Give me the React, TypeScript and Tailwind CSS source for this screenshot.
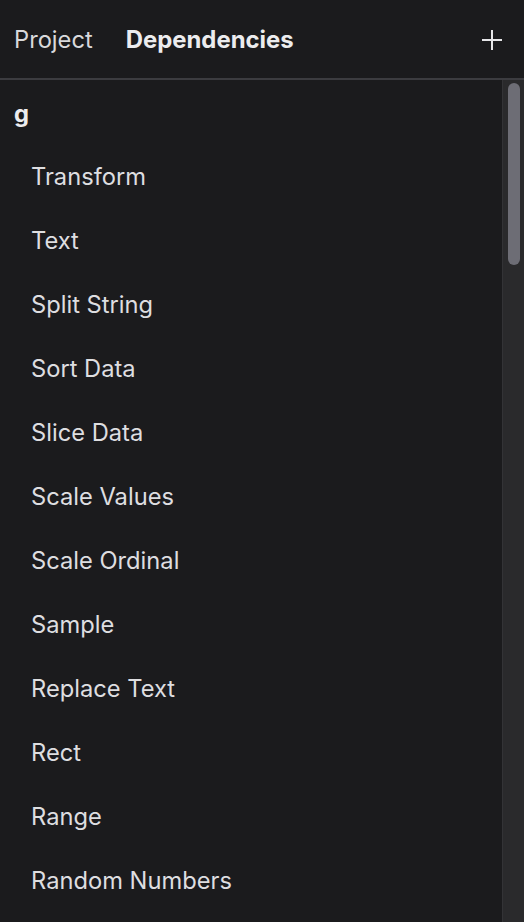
import React from "react";

const items = [
  "Transform",
  "Text",
  "Split String",
  "Sort Data",
  "Slice Data",
  "Scale Values",
  "Scale Ordinal",
  "Sample",
  "Replace Text",
  "Rect",
  "Range",
  "Random Numbers",
];

export default function App() {
  return (
    <div
      className="h-[922px] w-[524px] overflow-hidden bg-[#1b1b1d] flex flex-col"
      style={{ fontFamily: "Inter, 'Noto Sans', sans-serif" }}
    >
      <div className="h-[80px] shrink-0 flex items-center pl-[14px] pr-[22px] pt-[1px] border-b-2 border-[#3c3c40]">
        <span className="text-[23.7px] text-[#d9d9db]">Project</span>
        <span className="ml-[33px] text-[23.9px] font-bold text-[#ececee]">Dependencies</span>
        <span className="ml-auto flex">
          <svg width="20" height="20" viewBox="0 0 20 20" fill="none">
            <path d="M10 0v20M0 10h20" stroke="#e6e6e8" strokeWidth="2" />
          </svg>
        </span>
      </div>
      <div className="flex flex-1 min-h-0">
        <div className="flex-1 overflow-hidden">
          <div className="h-[65px] flex items-center pl-[14px] pt-[3px]">
            <span className="text-[23.7px] font-bold text-[#ececee]">g</span>
          </div>
          {items.map((t) => (
            <div key={t} className="h-[64px] flex items-center pl-[31px]">
              <span className="text-[23.7px] text-[#dedee0] whitespace-nowrap">{t}</span>
            </div>
          ))}
        </div>
        <div className="w-[22px] shrink-0 bg-[#2a2a2c] border-l border-[#333336] pt-[3px] flex justify-center">
          <div className="w-[12px] h-[182px] rounded-full bg-[#6d6d75]" />
        </div>
      </div>
    </div>
  );
}
